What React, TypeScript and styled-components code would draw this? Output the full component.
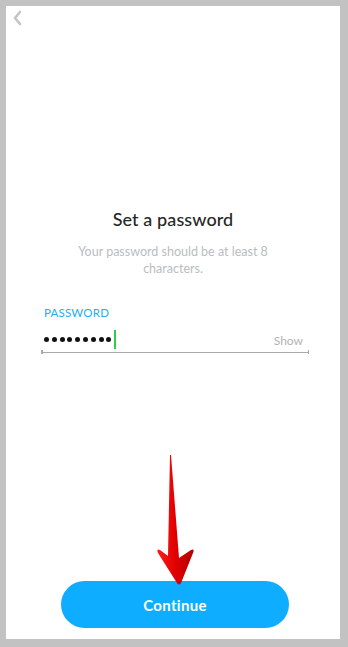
import React from "react";
import styled, { createGlobalStyle } from "styled-components";

const GlobalStyle = createGlobalStyle`
  html, body {
    margin: 0;
    padding: 0;
    background: #c2c2c2;
  }
  body {
    font-family: "Lato", "Noto Sans", sans-serif;
  }
`;

const Frame = styled.div`
  width: 348px;
  height: 647px;
  box-sizing: border-box;
  padding: 6px 8px 8px 6px;
  background: #c2c2c2;
`;

const Panel = styled.div`
  position: relative;
  height: 100%;
  background: #ffffff;
  display: flex;
  flex-direction: column;
`;

const BackButton = styled.button`
  align-self: flex-start;
  border: none;
  background: none;
  padding: 4px 0 0 6px;
  height: 22px;
  cursor: pointer;
  display: flex;
`;

const Content = styled.div`
  margin-top: 180px;
  display: flex;
  flex-direction: column;
  align-items: center;
`;

const Title = styled.h1`
  margin: 0;
  font-size: 18px;
  font-weight: 500;
  color: #262626;
  letter-spacing: 0.1px;
`;

const Subtitle = styled.p`
  margin: 13px 0 0;
  width: 215px;
  text-align: center;
  font-size: 12.5px;
  line-height: 17px;
  color: #b9bdc1;
`;

const Field = styled.div`
  margin-top: 29px;
  width: 268px;
  align-self: flex-start;
  margin-left: 35px;
`;

const Label = styled.div`
  font-size: 11.5px;
  color: #20aef2;
  padding-left: 3px;
  letter-spacing: 0.2px;
`;

const InputRow = styled.div`
  margin-top: 8px;
  height: 25px;
  display: flex;
  align-items: center;
  padding: 0 6px 0 3px;
  border-bottom: 1.5px solid #a9a9a9;
  position: relative;
  &::before,
  &::after {
    content: "";
    position: absolute;
    bottom: -1.5px;
    width: 1.5px;
    height: 4px;
    background: #a9a9a9;
  }
  &::before {
    left: 0;
  }
  &::after {
    right: 0;
  }
`;

const Dots = styled.span`
  display: flex;
  gap: 2.8px;
`;

const Dot = styled.span`
  width: 5px;
  height: 5px;
  border-radius: 50%;
  background: #111;
`;

const Caret = styled.span`
  display: inline-block;
  width: 2px;
  height: 19px;
  margin-left: 3px;
  background: #2ecc4f;
`;

const ShowToggle = styled.span`
  margin-left: auto;
  margin-top: 1px;
  font-size: 12px;
  color: #b3b3b3;
`;

const Spacer = styled.div`
  flex: 1;
`;

const ContinueButton = styled.button`
  align-self: center;
  margin: 0 0 11px 4px;
  width: 228px;
  height: 47px;
  border: none;
  border-radius: 24px;
  background: #0eadff;
  color: #ffffff;
  font-family: "Lato", "Noto Sans", sans-serif;
  font-weight: 700;
  font-size: 15px;
  letter-spacing: 0.3px;
  cursor: pointer;
`;

const ArrowOverlay = styled.svg`
  position: absolute;
  left: 149px;
  top: 446px;
  pointer-events: none;
`;

export default function App() {
  return (
    <>
      <GlobalStyle />
      <Frame>
        <Panel>
          <BackButton aria-label="Back">
            <svg width="10" height="16" viewBox="0 0 10 16">
              <path
                d="M8 2 L3 8 L8 14"
                fill="none"
                stroke="#c4c4c4"
                strokeWidth="2.6"
                strokeLinecap="round"
                strokeLinejoin="round"
              />
            </svg>
          </BackButton>
          <Content>
            <Title>Set a password</Title>
            <Subtitle>Your password should be at least 8 characters.</Subtitle>
            <Field>
              <Label>PASSWORD</Label>
              <InputRow>
                <Dots>
                  {Array.from({ length: 9 }, (_, i) => (
                    <Dot key={i} />
                  ))}
                </Dots>
                <Caret />
                <ShowToggle>Show</ShowToggle>
              </InputRow>
            </Field>
          </Content>
          <Spacer />
          <ContinueButton>Continue</ContinueButton>
          <ArrowOverlay width="50" height="134" viewBox="0 0 50 134">
            <defs>
              <linearGradient id="shaft" x1="0" x2="1" y1="0" y2="0">
                <stop offset="0" stopColor="#ff1a1a" />
                <stop offset="0.5" stopColor="#e00000" />
                <stop offset="1" stopColor="#b30000" />
              </linearGradient>
            </defs>
            <path
              d="M15 3 L13 104 L5 98 Q1 96 3 101 L22 131 Q24 134 26 131 L38 101 Q40 96 36 98 L24 106 L16 3 Z"
              fill="url(#shaft)"
            />
          </ArrowOverlay>
        </Panel>
      </Frame>
    </>
  );
}
